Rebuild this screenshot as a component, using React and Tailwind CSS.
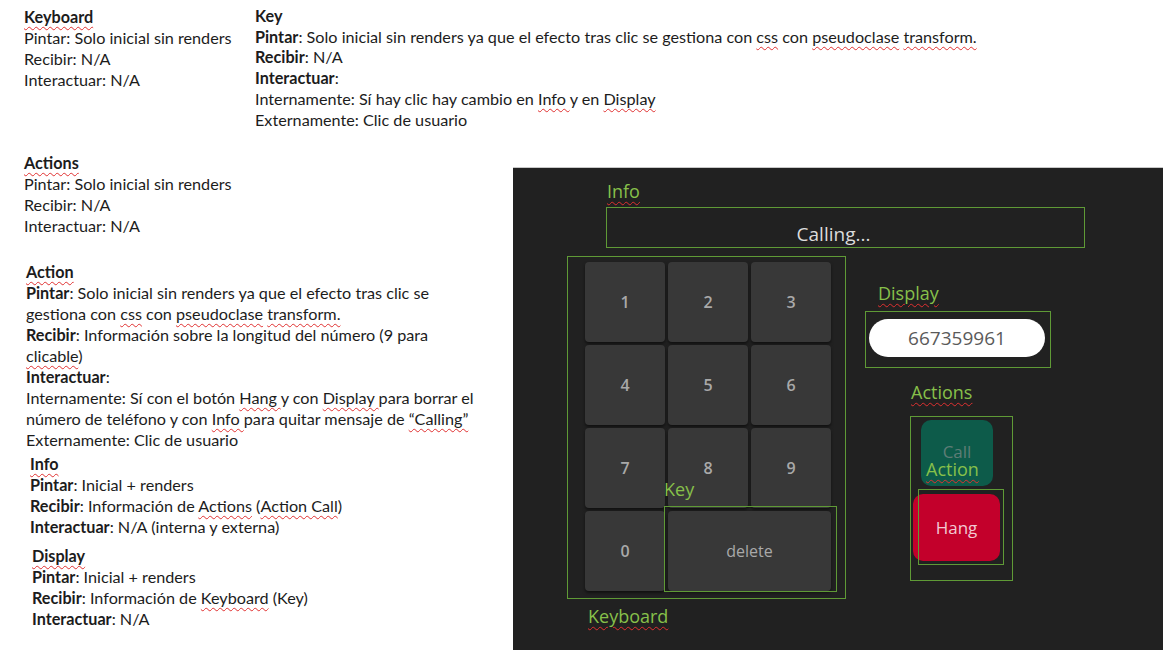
import React from "react";

const sq = "underline decoration-wavy decoration-[#e03030] decoration-1 underline-offset-[3px]";

function W({ children }) {
  return <span className={sq}>{children}</span>;
}

function B({ children }) {
  return <span className="font-bold">{children}</span>;
}

function Key({ label, wide }) {
  return (
    <div
      className={`${wide ? "col-span-2 font-normal" : "font-semibold"} h-[80px] rounded-[4px] bg-[#383838] shadow-[0_2px_3px_rgba(0,0,0,0.5)] flex items-center justify-center text-[16px] text-[#a9a9a9]`}
    >
      {label}
    </div>
  );
}

export default function App() {
  const keys = ["1", "2", "3", "4", "5", "6", "7", "8", "9", "0"];
  return (
    <div
      className="w-[1163px] h-[652px] bg-white overflow-hidden text-[16.2px] leading-[21px] text-[#1c1c1c]"
      style={{ fontFamily: "Lato, 'Noto Sans', sans-serif" }}
    >
      {/* top row */}
      <div className="flex pt-[6px]">
        <div className="w-[255px] pl-[24px]">
          <div className={`font-bold ${sq} inline-block`}>Keyboard</div>
          <div>Pintar: Solo inicial sin renders</div>
          <div>Recibir: N/A</div>
          <div>Interactuar: N/A</div>
        </div>
        <div className="leading-[20.7px]">
          <div className="font-bold">Key</div>
          <div>
            <B>Pintar</B>: Solo inicial sin renders ya que el efecto tras clic se gestiona con <W>css</W> con{" "}
            <W>pseudoclase</W> <W>transform.</W>
          </div>
          <div>
            <B>Recibir</B>: N/A
          </div>
          <div>
            <B>Interactuar</B>:
          </div>
          <div>
            Internamente: Sí hay clic hay cambio en <W>Info </W>y en <W>Display</W>
          </div>
          <div>Externamente: Clic de usuario</div>
        </div>
      </div>

      {/* bottom row */}
      <div className="flex mt-[22px]">
        <div className="w-[513px]">
          <div className="pl-[24px]">
            <div className={`font-bold ${sq} inline-block`}>Actions</div>
            <div>Pintar: Solo inicial sin renders</div>
            <div>Recibir: N/A</div>
            <div>Interactuar: N/A</div>
          </div>

          <div className="pl-[26px] mt-[25px]">
            <div className={`font-bold ${sq} inline-block`}>Action</div>
            <div>
              <B>Pintar</B>: Solo inicial sin renders ya que el efecto tras clic se
            </div>
            <div>
              gestiona con <W>css</W> con <W>pseudoclase</W> <W>transform.</W>
            </div>
            <div>
              <B>Recibir</B>: Información sobre la longitud del número (9 para
            </div>
            <div>
              <W>clicable</W>)
            </div>
            <div>
              <B>Interactuar</B>:
            </div>
            <div>
              Internamente: Sí con el botón <W>Hang </W>y con <W>Display </W>para borrar el
            </div>
            <div>
              número de teléfono y con <W>Info </W>para quitar mensaje de <W>“Calling”</W>
            </div>
            <div>Externamente: Clic de usuario</div>
          </div>

          <div className="pl-[30px] mt-[3px]">
            <div className={`font-bold ${sq} inline-block`}>Info</div>
            <div>
              <B>Pintar</B>: Inicial + renders
            </div>
            <div>
              <B>Recibir</B>: Información de <W>Actions</W> (<W>Action Call</W>)
            </div>
            <div>
              <B>Interactuar</B>: N/A (interna y externa)
            </div>
          </div>

          <div className="pl-[32px] mt-[8px]">
            <div className={`font-bold ${sq} inline-block`}>Display</div>
            <div>
              <B>Pintar</B>: Inicial + renders
            </div>
            <div>
              <B>Recibir</B>: Información de <W>Keyboard</W> (Key)
            </div>
            <div>
              <B>Interactuar</B>: N/A
            </div>
          </div>
        </div>

        {/* app screenshot */}
        <div
          className="mt-[15px] w-[650px] h-[483px] bg-[#212121] border-t border-[#c8c8c8] text-[#87c04a]"
          style={{ fontFamily: "'Open Sans', 'Noto Sans', sans-serif" }}
        >
          <div className={`ml-[94px] mt-[11px] text-[18px] leading-[24px] inline-block ${sq}`}>Info</div>
          <div className="ml-[93px] mt-[4px] w-[479px] h-[41px] border border-[#5f9a36] flex items-end justify-center pb-[2px] pr-[24px] text-[19px] text-[#dcdcdc]">
            Calling...
          </div>

          <div className="flex mt-[8px]">
            <div className="ml-[54px]">
              <div className="relative w-[279px] h-[343px] border border-[#5f9a36] pl-[17px] pt-[5px]">
                <div className="grid grid-cols-[80px_80px_80px] gap-x-[3px] gap-y-[3px]">
                  {keys.map((k) => (
                    <Key key={k} label={k} />
                  ))}
                  <Key label="delete" wide />
                </div>
                <div className="absolute left-[96px] top-[220px] text-[18px] leading-[24px]">Key</div>
                <div className="absolute left-[96px] top-[249px] w-[173px] h-[86px] border border-[#5f9a36]" />
              </div>
              <div className={`ml-[21px] mt-[5px] text-[18px] leading-[24px] inline-block ${sq}`}>Keyboard</div>
            </div>

            <div className="ml-[19px]">
              <div className={`ml-[13px] mt-[25px] text-[18px] leading-[24px] inline-block ${sq}`}>Display</div>
              <div className="mt-[6px] w-[186px] h-[57px] border border-[#5f9a36] pl-[3px] pt-[7px]">
                <div className="w-[176px] h-[38px] rounded-full bg-white flex items-center justify-center text-[19px] text-[#5a5a5a]">
                  667359961
                </div>
              </div>

              <div className={`ml-[46px] mt-[12px] text-[18px] leading-[24px] inline-block ${sq}`}>Actions</div>
              <div className="relative ml-[45px] mt-[12px] w-[103px] h-[165px] border border-[#5f9a36] pt-[3px]">
                <div className="ml-[10px] w-[72px] h-[66px] rounded-[10px] bg-[#0d5b4a] flex items-center justify-center pb-[4px] text-[17px] text-[#5e7d76]">
                  Call
                </div>
                <div className="ml-[2px] mt-[8px] w-[87px] h-[67px] rounded-[10px] bg-[#c3002b] flex items-center justify-center text-[17px] text-[#f2c9d3]">
                  Hang
                </div>
                <div className={`absolute left-[15px] top-[40px] text-[18px] leading-[24px] ${sq}`}>Action</div>
                <div className="absolute left-[7px] top-[72px] w-[86px] h-[76px] border border-[#5f9a36]" />
              </div>
            </div>
          </div>
        </div>
      </div>
    </div>
  );
}
